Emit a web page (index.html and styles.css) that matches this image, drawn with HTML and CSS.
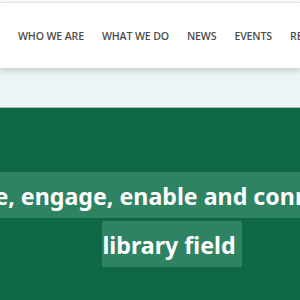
FILE: index.html
```html
<!DOCTYPE html>
<html lang="en">
<head>
    <meta charset="UTF-8">
    <meta name="viewport" content="width=device-width, initial-scale=1.0">
    <title>Who we are</title>
    <link rel="stylesheet" href="styles.css">
</head>
<body>
    <header class="site-header">
        <nav class="main-nav">
            <a href="#">WHO WE ARE</a>
            <a href="#">WHAT WE DO</a>
            <a href="#">NEWS</a>
            <a href="#">EVENTS</a>
            <a href="#">RESOURCES</a>
        </nav>
    </header>

    <div class="breadcrumb-band"></div>

    <section class="hero">
        <div class="hero-inner">
            <h1><span>Inspire, engage, enable and connect the library field</span></h1>
        </div>
    </section>
</body>
</html>
```

FILE: styles.css
```css
body {
    margin: 0;
    padding: 0;
    font-family: "Open Sans", "Noto Sans", sans-serif;
    overflow: hidden;
    height: 300px;
    background-color: white;
}
.site-header {
    position: relative;
    z-index: 2;
    margin-top: 2px;
    border-top: 1px solid #e2e2e2;
    height: 65px;
    background: white;
    box-shadow: 0 2px 7px rgba(0, 0, 0, 0.2);
    display: flex;
    align-items: center;
    overflow: hidden;
}
.main-nav {
    display: flex;
    gap: 18px;
    padding-left: 18px;
    white-space: nowrap;
}
.main-nav a {
    color: #4d4d4d;
    font-size: 10.6px;
    font-weight: 600;
    letter-spacing: -0.15px;
    text-decoration: none;
}
.breadcrumb-band {
    height: 39px;
    background-color: #edf4f6;
    border-bottom: 1px solid #9cc4b3;
}
.hero {
    background-color: #0f6845;
    padding-top: 64px;
    height: 128px;
    overflow: hidden;
}
.hero-inner {
    width: 344px;
    display: flex;
    justify-content: center;
}
.hero h1 {
    flex: none;
    width: 520px;
    margin: 0;
    text-align: center;
    text-indent: -20px;
    font-family: "Noto Sans", "Open Sans", sans-serif;
    font-size: 23.2px;
    font-weight: 700;
    line-height: 49px;
    color: white;
}
.hero h1 span {
    background-color: #2e8362;
    padding: 8px 6px 6px 0;
    -webkit-box-decoration-break: clone;
    box-decoration-break: clone;
}
```
